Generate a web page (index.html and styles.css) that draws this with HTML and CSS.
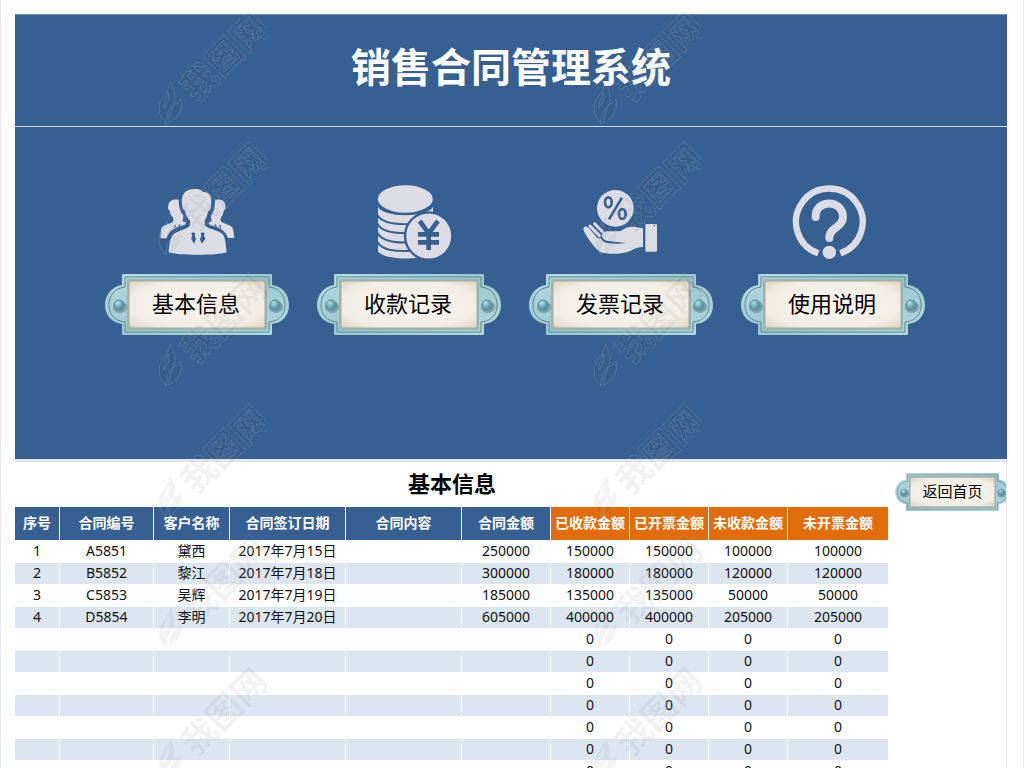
FILE: index.html
```html
<!DOCTYPE html>
<html lang="zh-CN">
<head>
<meta charset="utf-8">
<meta name="viewport" content="width=device-width, initial-scale=1">
<title>销售合同管理系统</title>
<link rel="stylesheet" href="styles.css">
</head>
<body>
<svg class="defs" aria-hidden="true">
  <defs>
    <linearGradient id="metal" x1="0" y1="0" x2="1" y2="1">
      <stop offset="0" stop-color="#b9dbe0"/><stop offset=".5" stop-color="#9cc7cf"/><stop offset="1" stop-color="#b4d9de"/>
    </linearGradient>
    <radialGradient id="paper" cx=".5" cy=".5" r=".72">
      <stop offset="0" stop-color="#f7f5ef"/><stop offset=".7" stop-color="#f2eee6"/><stop offset="1" stop-color="#ddd0bc"/>
    </radialGradient>
    <radialGradient id="rivet" cx=".35" cy=".3" r=".8">
      <stop offset="0" stop-color="#b5dfe5"/><stop offset=".5" stop-color="#6fa9b5"/><stop offset="1" stop-color="#4a7c8a"/>
    </radialGradient>
    <symbol id="plate" viewBox="0 0 184 61">
      <path d="M18 0H166Q167 0 167 1V11C177 12 184 20 184 31S177 49 167 50V60Q167 61 166 61H18Q17 61 17 60V50C7 49 0 41 0 31S7 12 17 11V1Q17 0 18 0Z" fill="url(#metal)"/>
      <path d="M20 3H164V13C174 14 180 21 180 31S174 47 164 48V58H20V48C10 47 4 41 4 31S10 14 20 13Z" fill="none" stroke="#5d8790" stroke-width="1"/>
      <path d="M22 5H162V56H22Z" fill="#8fb8c0"/>
      <rect x="24" y="7" width="136" height="47" rx="2" fill="url(#paper)" stroke="#b6a68f"/>
      <ellipse cx="15" cy="33" rx="7" ry="6" fill="#4b727b" opacity=".5"/>
      <circle cx="14" cy="31" r="5" fill="url(#rivet)" stroke="#5a8c98"/>
      <ellipse cx="171" cy="33" rx="7" ry="6" fill="#4b727b" opacity=".5"/>
      <circle cx="170" cy="31" r="5" fill="url(#rivet)" stroke="#5a8c98"/>
    </symbol>
    <symbol id="mark" viewBox="0 0 110 120">
      <path d="M13 76C12 88 1 93 2 104C3 112 7 114 9 118C9 108 12 103 17 98C14 105 12 110 12 117C22 111 26 103 24 93C22 97 19 99 17 97C19 91 17 82 13 76ZM11 86C14 93 10 97 7 102C5 97 10 93 11 86Z"/>
      <g transform="translate(5 111) rotate(-45)"><text x="34" y="14">我图网</text></g>
    </symbol>
  </defs>
</svg>

<div class="page">
  <header class="banner"><h1>销售合同管理系统</h1></header>

  <nav class="menu" aria-label="主菜单">
    <div class="entry">
      <svg class="icon" viewBox="195 45 252 222" aria-hidden="true">
        <path d="M266 89C245 86 235 95 235 107C233 111 234 119 239 122C241 133 246 139 250 143V153L243 159C225 166 215 168 213 180L211 205H230C236 184 252 174 271 169C282 166 290 163 287 157L280 155C276 152 280 145 280 136C272 127 268 115 267 104Z"/>
        <path d="M376 89C397 86 406 95 406 107C408 111 406 119 401 122C400 133 396 139 392 143V153L400 159C418 166 428 168 430 180L433 204H414C407 184 392 174 373 169C361 166 354 163 357 157L363 155C367 151 363 145 363 136C371 127 374 115 374 104Z"/>
        <path d="M276 101C273 78 281 57 315 57C331 57 335 62 340 66C358 66 367 79 363 105C362 115 361 122 355 123C352 138 347 146 344 151V166C353 179 396 181 402 199C407 212 408 231 410 247C384 257 261 257 236 247C237 229 240 211 246 199C256 181 292 181 300 166V151C292 145 288 136 285 122C278 119 277 110 276 101Z"/>
        <path class="cut" d="M304 190L310 187L316 190L314 197L318 207L313 221L304 208L306 197ZM332 190L338 187L344 190L342 197L346 207L335 221L330 208L334 197Z"/>
        <path class="cutline" d="M253 173L256 165M266 170L270 163M392 173L389 165M379 170L375 163"/>
      </svg>
      <button class="plate" type="button"><svg class="frame" aria-hidden="true"><use href="#plate"/></svg><span>基本信息</span></button>
    </div>
    <div class="entry">
      <svg class="icon" viewBox="171 45 252 222" aria-hidden="true">
        <path d="M204 110C216 143 355 143 369 110V240C350 276 220 271 204 244Z"/>
        <path class="band" d="M202 135C216 160 255 164 300 162M202 161C216 187 255 191 300 189M202 188C216 215 255 219 300 217M202 216C216 241 255 246 318 242"/>
        <ellipse class="ring" cx="286" cy="87" rx="86" ry="45"/>
        <circle class="ring" cx="356" cy="198" r="71"/>
        <path class="yen" d="M329 153L356 190L384 153M356 187V240M324 193H387M324 217H387"/>
      </svg>
      <button class="plate" type="button"><svg class="frame" aria-hidden="true"><use href="#plate"/></svg><span>收款记录</span></button>
    </div>
    <div class="entry">
      <svg class="icon" viewBox="177 45 252 222" aria-hidden="true">
        <circle cx="286" cy="115" r="55"/>
        <g class="percent"><ellipse cx="265" cy="97" rx="10" ry="15"/><ellipse cx="307" cy="132" rx="10" ry="15"/><path d="M306 83L267 148"/></g>
        <path d="M191 174C196 166 204 169 211 179L232 203C236 206 240 206 243 205C246 214 254 219 266 220C285 222 305 221 319 219C300 216 280 216 264 213C249 209 243 200 247 191C250 185 256 184 263 184H300C313 176 322 170 338 170C354 170 359 174 369 175V231C348 231 339 240 323 246C295 254 260 252 240 246C219 229 204 207 195 190C191 183 189 178 191 174Z"/>
        <path class="finger" d="M210 168L238 197M224 161L246 184"/>
        <rect x="376" y="162" width="35" height="83" rx="3"/>
        <path class="crease" d="M403 170V164"/>
      </svg>
      <button class="plate" type="button"><svg class="frame" aria-hidden="true"><use href="#plate"/></svg><span>发票记录</span></button>
    </div>
    <div class="entry">
      <svg class="icon" viewBox="183 45 252 222" aria-hidden="true">
        <path class="loop" d="M265 250A100 100 0 1 1 331 250"/>
        <path class="hook" d="M257 141C254 88 338 86 339 141C339 174 297 171 298 204"/>
        <circle cx="298" cy="247" r="20"/>
      </svg>
      <button class="plate" type="button"><svg class="frame" aria-hidden="true"><use href="#plate"/></svg><span>使用说明</span></button>
    </div>
  </nav>

  <main class="sheet">
    <section class="records">
      <h2>基本信息</h2>
      <table>
        <colgroup><col class="w-no"><col class="w-code"><col class="w-name"><col class="w-wide"><col class="w-wide"><col class="w-sum"><col class="w-part"><col class="w-part"><col class="w-part"><col class="w-last"></colgroup>
        <thead>
          <tr><th>序号</th><th>合同编号</th><th>客户名称</th><th>合同签订日期</th><th>合同内容</th><th>合同金额</th><th class="money">已收款金额</th><th class="money">已开票金额</th><th class="money">未收款金额</th><th class="money">未开票金额</th></tr>
        </thead>
        <tbody>
          <tr><td>1</td><td>A5851</td><td>黛西</td><td>2017年7月15日</td><td></td><td>250000</td><td>150000</td><td>150000</td><td>100000</td><td>100000</td></tr>
          <tr><td>2</td><td>B5852</td><td>黎江</td><td>2017年7月18日</td><td></td><td>300000</td><td>180000</td><td>180000</td><td>120000</td><td>120000</td></tr>
          <tr><td>3</td><td>C5853</td><td>吴辉</td><td>2017年7月19日</td><td></td><td>185000</td><td>135000</td><td>135000</td><td>50000</td><td>50000</td></tr>
          <tr><td>4</td><td>D5854</td><td>李明</td><td>2017年7月20日</td><td></td><td>605000</td><td>400000</td><td>400000</td><td>205000</td><td>205000</td></tr>
          <tr><td></td><td></td><td></td><td></td><td></td><td></td><td>0</td><td>0</td><td>0</td><td>0</td></tr>
          <tr><td></td><td></td><td></td><td></td><td></td><td></td><td>0</td><td>0</td><td>0</td><td>0</td></tr>
          <tr><td></td><td></td><td></td><td></td><td></td><td></td><td>0</td><td>0</td><td>0</td><td>0</td></tr>
          <tr><td></td><td></td><td></td><td></td><td></td><td></td><td>0</td><td>0</td><td>0</td><td>0</td></tr>
          <tr><td></td><td></td><td></td><td></td><td></td><td></td><td>0</td><td>0</td><td>0</td><td>0</td></tr>
          <tr><td></td><td></td><td></td><td></td><td></td><td></td><td>0</td><td>0</td><td>0</td><td>0</td></tr>
          <tr><td></td><td></td><td></td><td></td><td></td><td></td><td>0</td><td>0</td><td>0</td><td>0</td></tr>
        </tbody>
      </table>
    </section>
    <aside class="side">
      <button class="plate small" type="button"><svg class="frame" aria-hidden="true"><use href="#plate"/></svg><span>返回首页</span></button>
    </aside>
  </main>

  <div class="marks" aria-hidden="true">
    <svg><use href="#mark"/></svg><svg><use href="#mark"/></svg>
    <svg><use href="#mark"/></svg><svg><use href="#mark"/></svg>
    <svg><use href="#mark"/></svg><svg><use href="#mark"/></svg>
    <svg><use href="#mark"/></svg><svg><use href="#mark"/></svg>
    <svg><use href="#mark"/></svg><svg><use href="#mark"/></svg>
    <svg><use href="#mark"/></svg><svg><use href="#mark"/></svg>
  </div>
</div>
</body>
</html>
```
FILE: styles.css
```css
* { box-sizing: border-box; }

:root {
  --blue: #366092;
  --orange: #e26b0a;
  --band: #dce6f1;
  --pale: #dcdce4;
}

body {
  margin: 0;
  background: #fff;
  color: #111;
  font: 14px/20px "Noto Sans", "Noto Sans CJK SC", sans-serif;
}

.defs { position: absolute; width: 0; height: 0; }

.page {
  position: relative;
  overflow: hidden;
  min-height: 100vh;
  padding: 14px 16px 0 14px;
  border-left: 1px solid #e6ebf1;
  border-right: 1px solid #f0f0f0;
}

.banner {
  padding: 22px 0 29px;
  background: var(--blue);
  border-top: 1px solid #6b8bb0;
  border-bottom: 1px solid #ced8e2;
  text-align: center;
}

.banner h1 {
  margin: 0;
  color: #fff;
  font-size: 40px;
  line-height: 60px;
  font-weight: 700;
}

.menu {
  display: grid;
  grid-template-columns: repeat(4, 1fr);
  padding: 58px 68px 124px 76px;
  background: var(--blue);
}

.entry {
  display: flex;
  flex-direction: column;
  align-items: center;
  gap: 15px;
}

.icon { width: 84px; height: 74px; overflow: visible; fill: var(--pale); }
.icon .cut { fill: var(--blue); }
.icon .cutline { fill: none; stroke: var(--blue); stroke-width: 4; }
.icon .band { fill: none; stroke: var(--blue); stroke-width: 6; }
.icon .ring { stroke: var(--blue); stroke-width: 7; }
.icon .yen { fill: none; stroke: var(--blue); stroke-width: 14; }
.icon .percent { fill: none; stroke: var(--blue); stroke-width: 8; }
.icon .crease { fill: none; stroke: var(--blue); stroke-width: 3; }
.icon .finger { fill: none; stroke: var(--pale); stroke-width: 9; stroke-linecap: round; }
.icon .loop { fill: none; stroke: var(--pale); stroke-width: 19; }
.icon .hook { fill: none; stroke: var(--pale); stroke-width: 24; stroke-linecap: round; }

.plate {
  position: relative;
  width: 184px;
  height: 61px;
  padding: 0 2px 5px 0;
  border: 0;
  background: none;
  color: #000;
  font: 22px/30px "Noto Sans CJK SC", sans-serif;
  cursor: pointer;
}

.plate .frame { position: absolute; inset: 0; width: 100%; height: 100%; }
.plate span { position: relative; }

.plate.small {
  width: 115px;
  height: 38px;
  padding: 0 0 2px;
  font-size: 15px;
  line-height: 20px;
}

.sheet {
  display: flex;
  border-top: 3px solid #e3e7ec;
}

.records { flex: 1; }

.records h2 {
  margin: 0;
  padding: 6px 0 9px;
  color: #000;
  font-size: 22px;
  line-height: 30px;
  text-align: center;
}

.side {
  flex: 0 0 118px;
  overflow: hidden;
  padding: 11px 0 0 6px;
  border-right: 1px solid #e6e8f0;
}

table {
  width: 100%;
  table-layout: fixed;
  border-collapse: separate;
  border-spacing: 0;
}

th, td {
  height: 22px;
  padding: 0 0 1px;
  border-right: 1px solid #fff;
  border-bottom: 1px solid #fff;
  line-height: 20px;
  text-align: center;
  white-space: nowrap;
}

th {
  height: 34px;
  padding-bottom: 2px;
  background: var(--blue);
  color: #fff;
  font-weight: 700;
}

th.money { background: var(--orange); }
tbody tr:nth-child(even) td { background: var(--band); }

.w-no { width: 45px; }
.w-code { width: 94px; }
.w-name { width: 76px; }
.w-wide { width: 116px; }
.w-sum { width: 89px; }
.w-part { width: 79px; }
.w-last { width: 101px; }

.marks {
  position: absolute;
  inset: 0;
  display: grid;
  grid-template-columns: repeat(2, 435px);
  grid-auto-rows: 131px;
  padding: 6px 0 0 156px;
  pointer-events: none;
}

.marks svg {
  width: 110px;
  height: 120px;
  fill: rgba(60, 60, 60, .06);
  stroke: rgba(235, 240, 245, .14);
  stroke-width: 1;
  font: 700 35px/1 "Noto Sans CJK SC", sans-serif;
}
```
